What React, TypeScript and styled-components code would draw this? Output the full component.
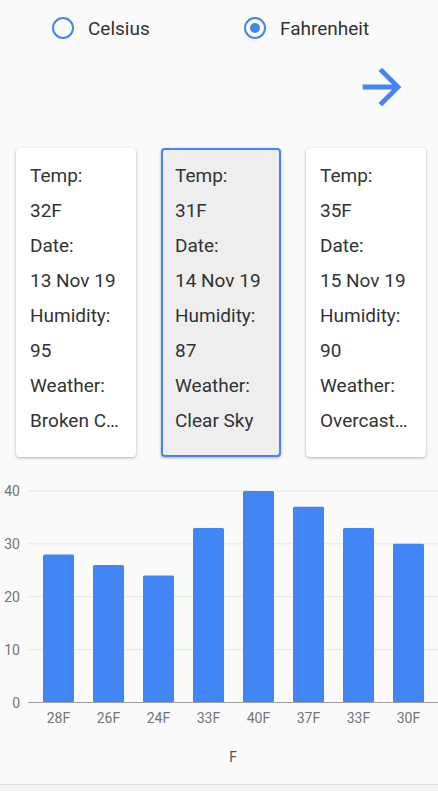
import React, { useState } from "react";
import styled, { createGlobalStyle } from "styled-components";

const GlobalStyle = createGlobalStyle`
  html, body {
    margin: 0;
    padding: 0;
    background: #fafafa;
    font-family: Roboto, "Liberation Sans", sans-serif;
  }
`;

const BLUE = "#4285f4";

const Page = styled.div`
  width: 438px;
  display: flex;
  flex-direction: column;
  overflow: hidden;
`;

const RadioRow = styled.div`
  height: 56px;
  display: flex;
  align-items: center;
  padding-left: 52px;
`;

const RadioLabel = styled.label`
  width: 192px;
  display: flex;
  align-items: center;
  gap: 14px;
  font-size: 19px;
  color: #333;
  cursor: pointer;
`;

const RadioCircle = styled.span<{ checked?: boolean }>`
  width: 22px;
  height: 22px;
  flex-shrink: 0;
  box-sizing: border-box;
  border: 2px solid ${BLUE};
  border-radius: 50%;
  display: flex;
  align-items: center;
  justify-content: center;
  &::after {
    content: "";
    width: 10px;
    height: 10px;
    border-radius: 50%;
    background: ${BLUE};
    display: ${({ checked }) => (checked ? "block" : "none")};
  }
`;

const ArrowRow = styled.div`
  display: flex;
  justify-content: flex-end;
  padding: 2px 27px 0 0;
  height: 90px;
`;

const ArrowButton = styled.button`
  width: 58px;
  height: 58px;
  padding: 0;
  border: none;
  background: none;
  cursor: pointer;
  svg {
    display: block;
  }
`;

const CardRow = styled.div`
  display: flex;
  gap: 25px;
  padding-left: 16px;
`;

const Card = styled.div<{ selected?: boolean }>`
  width: 120px;
  height: 309px;
  box-sizing: border-box;
  padding: ${({ selected }) => (selected ? "8px 12px" : "10px 14px")};
  border-radius: 4px;
  background: ${({ selected }) => (selected ? "#eeeeee" : "#ffffff")};
  border: ${({ selected }) => (selected ? `2px solid ${BLUE}` : "none")};
  box-shadow: 0 1px 3px rgba(0, 0, 0, 0.3);
`;

const Line = styled.div`
  font-size: 19px;
  line-height: 35px;
  color: #333;
  white-space: nowrap;
  overflow: hidden;
  text-overflow: ellipsis;
`;

const ChartWrap = styled.div`
  margin-top: 13px;
  height: 314px;
  border-bottom: 1px solid #e0e0e0;
  svg {
    display: block;
  }
`;

const Footer = styled.div`
  height: 6px;
  background: #f2f2f2;
`;

type Day = { temp: string; date: string; humidity: number; weather: string };

const days: Day[] = [
  { temp: "32F", date: "13 Nov 19", humidity: 95, weather: "Broken Clouds" },
  { temp: "31F", date: "14 Nov 19", humidity: 87, weather: "Clear Sky" },
  { temp: "35F", date: "15 Nov 19", humidity: 90, weather: "Overcast Clouds" },
];

const bars = [28, 26, 24, 33, 40, 37, 33, 30];

const Chart: React.FC = () => {
  const zeroY = 232.5;
  const scale = 5.29;
  return (
    <svg width={438} height={314}>
      {[0, 10, 20, 30, 40].map((v) => {
        const y = zeroY - v * scale;
        return (
          <g key={v}>
            {v > 0 && <line x1={28} x2={438} y1={y} y2={y} stroke="#e6e6e6" strokeWidth={1} />}
            <text
              x={20}
              y={y + 5}
              textAnchor="end"
              fontSize={14}
              fill="#757575"
              fontFamily="Roboto, sans-serif"
            >
              {v}
            </text>
          </g>
        );
      })}
      {bars.map((v, i) => {
        const x = 43 + i * 50;
        const h = v * scale;
        return (
          <g key={i}>
            <rect x={x} y={zeroY - h} width={31} height={h} rx={1.5} fill={BLUE} />
            <text
              x={x + 15.5}
              y={253}
              textAnchor="middle"
              fontSize={14}
              fill="#757575"
              fontFamily="Roboto, sans-serif"
            >
              {v}F
            </text>
          </g>
        );
      })}
      <line x1={28} x2={438} y1={zeroY} y2={zeroY} stroke="#9e9e9e" strokeWidth={1} />
      <text x={233} y={292} textAnchor="middle" fontSize={14} fill="#555" fontFamily="Roboto, sans-serif">
        F
      </text>
    </svg>
  );
};

export default function App() {
  const [unit, setUnit] = useState<"C" | "F">("F");
  return (
    <Page>
      <GlobalStyle />
      <RadioRow>
        <RadioLabel onClick={() => setUnit("C")}>
          <RadioCircle checked={unit === "C"} />
          Celsius
        </RadioLabel>
        <RadioLabel onClick={() => setUnit("F")}>
          <RadioCircle checked={unit === "F"} />
          Fahrenheit
        </RadioLabel>
      </RadioRow>
      <ArrowRow>
        <ArrowButton aria-label="next">
          <svg width={58} height={58} viewBox="0 0 24 24">
            <path d="M12 4l-1.41 1.41L16.17 11H4v2h12.17l-5.58 5.59L12 20l8-8z" fill={BLUE} />
          </svg>
        </ArrowButton>
      </ArrowRow>
      <CardRow>
        {days.map((d, i) => (
          <Card key={d.date} selected={i === 1}>
            <Line>Temp:</Line>
            <Line>{d.temp}</Line>
            <Line>Date:</Line>
            <Line>{d.date}</Line>
            <Line>Humidity:</Line>
            <Line>{d.humidity}</Line>
            <Line>Weather:</Line>
            <Line>{d.weather}</Line>
          </Card>
        ))}
      </CardRow>
      <ChartWrap>
        <Chart />
      </ChartWrap>
      <Footer />
    </Page>
  );
}
